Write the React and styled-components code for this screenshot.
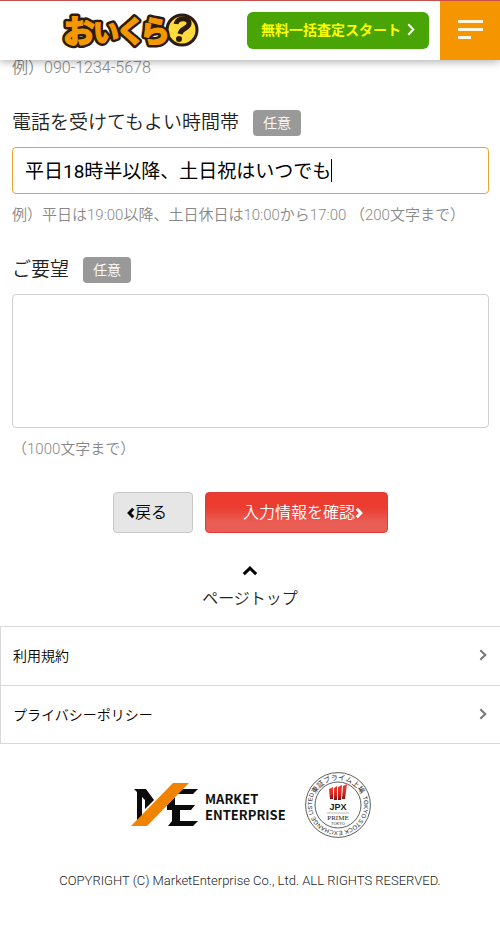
import React, { useState } from "react";
import styled, { createGlobalStyle } from "styled-components";

const Global = createGlobalStyle`
  *, *::before, *::after { box-sizing: border-box; }
  body {
    margin: 0;
    background: #fff;
    color: #222;
    font-family: Roboto, "Noto Sans CJK JP", sans-serif;
    font-size: 16px;
    font-weight: 350;
  }
  button, input, textarea { font-family: inherit; font-weight: inherit; }
`;

const Header = styled.header`
  position: sticky;
  top: 0;
  z-index: 10;
  display: flex;
  align-items: center;
  height: 60px;
  background: #fff;
  box-shadow: 0 2px 8px rgba(0, 0, 0, 0.3);
  border-top: 1px solid #c9504c;
`;

const LogoLink = styled.a`
  display: block;
  height: 40px;
  margin-left: auto;
  margin-right: 47px;
`;

const AssessButton = styled.a`
  display: flex;
  align-items: center;
  justify-content: center;
  gap: 6px;
  width: 182px;
  height: 37px;
  margin-right: 11px;
  padding-bottom: 2px;
  border-radius: 6px;
  background: #49a405;
  color: #ff0;
  font-size: 14px;
  font-weight: 700;
  line-height: 20px;
  white-space: nowrap;
  text-decoration: none;
`;

const MenuButton = styled.button`
  display: flex;
  flex-direction: column;
  justify-content: center;
  gap: 5px;
  width: 60px;
  align-self: stretch;
  padding: 0 17px 2px 18px;
  border: 0;
  background: #f59600;
`;

const MenuBar = styled.span`
  width: ${(p) => (p.$short ? "13px" : "25px")};
  height: 3px;
  background: #fff6e0;
`;

const Form = styled.form`
  padding: 0 11px 0 12px;
`;

const Hint = styled.p`
  margin: ${(p) => (p.$spaced ? "13px 0 0" : "0")};
  color: #888;
  font-size: ${(p) => (p.$large ? "16px" : "15px")};
  line-height: 16px;
`;

const FieldHead = styled.div`
  display: flex;
  align-items: center;
  gap: 14px;
  height: 26px;
  margin: 34px 0 11px;
`;

const Label = styled.label`
  font-size: 19px;
  line-height: 26px;
`;

const Badge = styled.span`
  padding: 0 10px;
  border-radius: 4px;
  background: #999;
  color: #fff;
  font-size: 14px;
  line-height: 26px;
`;

const InputWrap = styled.div`
  position: relative;
`;

const TextInput = styled.input`
  display: block;
  width: 100%;
  height: 47px;
  padding: 0 12px 2px;
  border: 1px solid #e5a52d;
  border-radius: 4px;
  outline: 0;
  background: #fff;
  color: #000;
  font-size: 19px;
  font-weight: 400;
  caret-color: transparent;
`;

const Caret = styled.span`
  position: absolute;
  top: 12px;
  left: 319px;
  width: 1px;
  height: 23px;
  background: #000;
`;

const TextArea = styled.textarea`
  display: block;
  width: 100%;
  height: 134px;
  padding: 12px;
  border: 1px solid #d0d0d0;
  border-radius: 4px;
  background: #fff;
  font-size: 19px;
  resize: none;
`;

const Actions = styled.div`
  display: flex;
  justify-content: center;
  gap: 12px;
  margin-top: 35px;
`;

const ActionButton = styled.button`
  display: flex;
  align-items: center;
  justify-content: ${(p) => (p.$primary ? "flex-end" : "flex-start")};
  width: ${(p) => (p.$primary ? "183px" : "80px")};
  height: 41px;
  padding: ${(p) => (p.$primary ? "0 24px 0 0" : "0 0 0 13px")};
  border: 1px solid ${(p) => (p.$primary ? "#e03c36" : "#c8c8c8")};
  border-radius: 4px;
  background: ${(p) => (p.$primary ? "linear-gradient(#ec3b2f 35%, #e95d54 75%)" : "#e6e6e6")};
  color: ${(p) => (p.$primary ? "#fff" : "#000")};
  font-size: 16px;
  line-height: 24px;
  white-space: nowrap;
`;

const PageTop = styled.a`
  display: flex;
  flex-direction: column;
  align-items: center;
  width: max-content;
  margin: 33px auto 15px;
  gap: 11px;
  color: #222;
  font-size: 16px;
  line-height: 24px;
  text-decoration: none;
`;

const BlackIcon = styled.span`
  display: flex;
  color: #000;
`;

const LinkList = styled.nav`
  border: 1px solid #d8d8d8;
  border-right: 0;
`;

const ListLink = styled.a`
  display: flex;
  align-items: center;
  justify-content: space-between;
  height: 58px;
  padding: 0 13px 2px 12px;
  color: #000;
  font-size: 14px;
  text-decoration: none;
  & + & { border-top: 1px solid #d8d8d8; }
`;

const Footer = styled.footer`
  padding: 28px 0 47px;
`;

const Marks = styled.div`
  display: flex;
  align-items: center;
  justify-content: center;
  gap: 20px;
`;

const Copyright = styled.p`
  margin: 33px 0 0;
  text-align: center;
  font-size: 13px;
  line-height: 20px;
`;

function Chevron({ w, h, stroke = 2, dir = "right" }) {
  const s = stroke / 2 + 0.3;
  const d = {
    right: `M${s} ${s} L${w - s - 0.4} ${h / 2} L${s} ${h - s}`,
    left: `M${w - s} ${s} L${s + 0.4} ${h / 2} L${w - s} ${h - s}`,
    up: `M${s} ${h - s} L${w / 2} ${s + 0.4} L${w - s} ${h - s}`,
  }[dir];
  return (
    <svg width={w} height={h} viewBox={`0 0 ${w} ${h}`} fill="none" stroke="currentColor" strokeWidth={stroke} aria-hidden="true">
      <path d={d} />
    </svg>
  );
}

const WhiteIcon = styled.span`
  display: flex;
  color: #fff;
`;

const GreyIcon = styled.span`
  display: flex;
  color: #777;
`;

const LogoDrawing = styled.svg`
  display: block;
  overflow: visible;
`;

const LogoLetter = styled.text`
  font-family: "Noto Sans CJK JP", sans-serif;
  font-weight: 900;
  stroke: #2b1b12;
  stroke-width: 6px;
  stroke-linejoin: round;
  fill: #2b1b12;
`;

const LogoFace = styled(LogoLetter)`
  stroke: #f39800;
  stroke-width: 1px;
  fill: #f39800;
`;

const letters = [
  { c: "お", x: 1, y: 32, s: 32 },
  { c: "い", x: 31, y: 31, s: 26 },
  { c: "く", x: 54, y: 31, s: 30 },
  { c: "ら", x: 78, y: 31, s: 30 },
];

function SiteLogo() {
  return (
    <LogoDrawing width="138" height="40" viewBox="0 0 138 40" role="img" aria-label="おいくら?">
      <circle cx="120" cy="19" r="15" fill="#ffdc3c" stroke="#2b1b12" strokeWidth="3" />
      {letters.map((l) => (
        <LogoLetter key={l.c} x={l.x} y={l.y} fontSize={l.s}>{l.c}</LogoLetter>
      ))}
      {letters.map((l) => (
        <LogoFace key={l.c} x={l.x} y={l.y} fontSize={l.s}>{l.c}</LogoFace>
      ))}
      <path d="M114 13 C115 6 128 6 127 13 C126 18 119 17 118 23" fill="none" stroke="#2b1b12" strokeWidth="5" />
      <circle cx="117" cy="28" r="3" fill="#2b1b12" />
    </LogoDrawing>
  );
}

const CompanyText = styled.text`
  font-family: "Noto Sans CJK JP", sans-serif;
  font-size: 13px;
  font-weight: 700;
  fill: #111;
`;

function CompanyLogo() {
  return (
    <svg width="155" height="46" viewBox="0 0 155 46" role="img" aria-label="MARKET ENTERPRISE">
      <g fill="#0b0b0b">
        <path d="M4 7h12l8 11-9 9v-9l-3-3v19L7 39V10z" />
        <path d="M52 7h16l-5 5H47z" />
        <path d="M37 23l8-8v8h20l-4 5H50v11h18l-5 5H38l4-5V28h-5z" />
      </g>
      <path fill="#f08300" d="M43 1h16L17 44H1z" />
      <CompanyText x="75" y="22">MARKET</CompanyText>
      <CompanyText x="75" y="38">ENTERPRISE</CompanyText>
    </svg>
  );
}

const SealText = styled.text`
  font-family: ${(p) => (p.$serif ? '"Liberation Serif", serif' : '"Liberation Sans", "Noto Sans CJK JP", sans-serif')};
  font-size: ${(p) => p.$size}px;
  font-weight: ${(p) => p.$weight || 400};
  text-anchor: middle;
  fill: #222;
`;

function ListedSeal() {
  return (
    <svg width="66" height="66" viewBox="0 0 66 66" role="img" aria-label="東証プライム上場 TOKYO STOCK EXCHANGE LISTED">
      <defs>
        <path id="seal-top" d="M8 33 A25 25 0 0 1 58 33" />
        <path id="seal-ring" d="M33 7 A26 26 0 1 1 32.9 7" />
        <linearGradient id="flame" x1="0" y1="0" x2="0" y2="1">
          <stop offset="0" stopColor="#ef4136" />
          <stop offset=".6" stopColor="#d7261e" />
          <stop offset="1" stopColor="#7d1111" />
        </linearGradient>
      </defs>
      <g fill="none" stroke="#333" strokeWidth="0.8">
        <circle cx="33" cy="33" r="32.4" />
        <circle cx="33" cy="33" r="23" />
      </g>
      <SealText $size={7}>
        <textPath href="#seal-top" startOffset="50%">東証プライム上場</textPath>
      </SealText>
      <SealText $size={6}>
        <textPath href="#seal-ring" startOffset="51%">TOKYO STOCK EXCHANGE LISTED</textPath>
      </SealText>
      <g fill="url(#flame)">
        <path d="M24 17l4-2v12h-3z" />
        <path d="M29 16l3-2v14h-3z" />
        <path d="M33 15l4-2-1 15h-3z" />
        <path d="M38 14l4-2-2 15h-3z" />
      </g>
      <SealText x="33" y="38" $size={9} $weight={700}>JPX</SealText>
      <path d="M22 41h22" stroke="#999" strokeWidth="0.7" />
      <SealText x="33" y="48" $size={7} $serif>PRIME</SealText>
      <SealText x="33" y="53" $size={4}>TOKYO</SealText>
    </svg>
  );
}

export default function App() {
  const [time, setTime] = useState("平日18時半以降、土日祝はいつでも");
  return (
    <>
      <Global />
      <Header>
        <LogoLink href="#"><SiteLogo /></LogoLink>
        <AssessButton href="#assess">
          無料一括査定スタート
          <WhiteIcon><Chevron w={8} h={13} stroke={2} /></WhiteIcon>
        </AssessButton>
        <MenuButton type="button" aria-label="メニュー">
          <MenuBar /><MenuBar /><MenuBar $short />
        </MenuButton>
      </Header>
      <main>
        <Form onSubmit={(e) => e.preventDefault()}>
          <Hint $large>例）090-1234-5678</Hint>
          <FieldHead>
            <Label htmlFor="time">電話を受けてもよい時間帯</Label>
            <Badge>任意</Badge>
          </FieldHead>
          <InputWrap>
            <TextInput id="time" value={time} onChange={(e) => setTime(e.target.value)} />
            <Caret aria-hidden="true" />
          </InputWrap>
          <Hint $spaced>例）平日は19:00以降、土日休日は10:00から17:00 （200文字まで）</Hint>
          <FieldHead>
            <Label htmlFor="request">ご要望</Label>
            <Badge>任意</Badge>
          </FieldHead>
          <TextArea id="request" />
          <Hint $spaced>（1000文字まで）</Hint>
          <Actions>
            <ActionButton type="button">
              <Chevron w={8} h={12} stroke={3} dir="left" />戻る
            </ActionButton>
            <ActionButton type="submit" $primary>
              入力情報を確認<Chevron w={8} h={12} stroke={3} />
            </ActionButton>
          </Actions>
        </Form>
        <PageTop href="#">
          <BlackIcon><Chevron w={16} h={10} stroke={3} dir="up" /></BlackIcon>
          ページトップ
        </PageTop>
        <LinkList>
          <ListLink href="#terms">利用規約<GreyIcon><Chevron w={8} h={12} /></GreyIcon></ListLink>
          <ListLink href="#privacy">プライバシーポリシー<GreyIcon><Chevron w={8} h={12} /></GreyIcon></ListLink>
        </LinkList>
      </main>
      <Footer>
        <Marks><CompanyLogo /><ListedSeal /></Marks>
        <Copyright>COPYRIGHT (C) MarketEnterprise Co., Ltd. ALL RIGHTS RESERVED.</Copyright>
      </Footer>
    </>
  );
}
